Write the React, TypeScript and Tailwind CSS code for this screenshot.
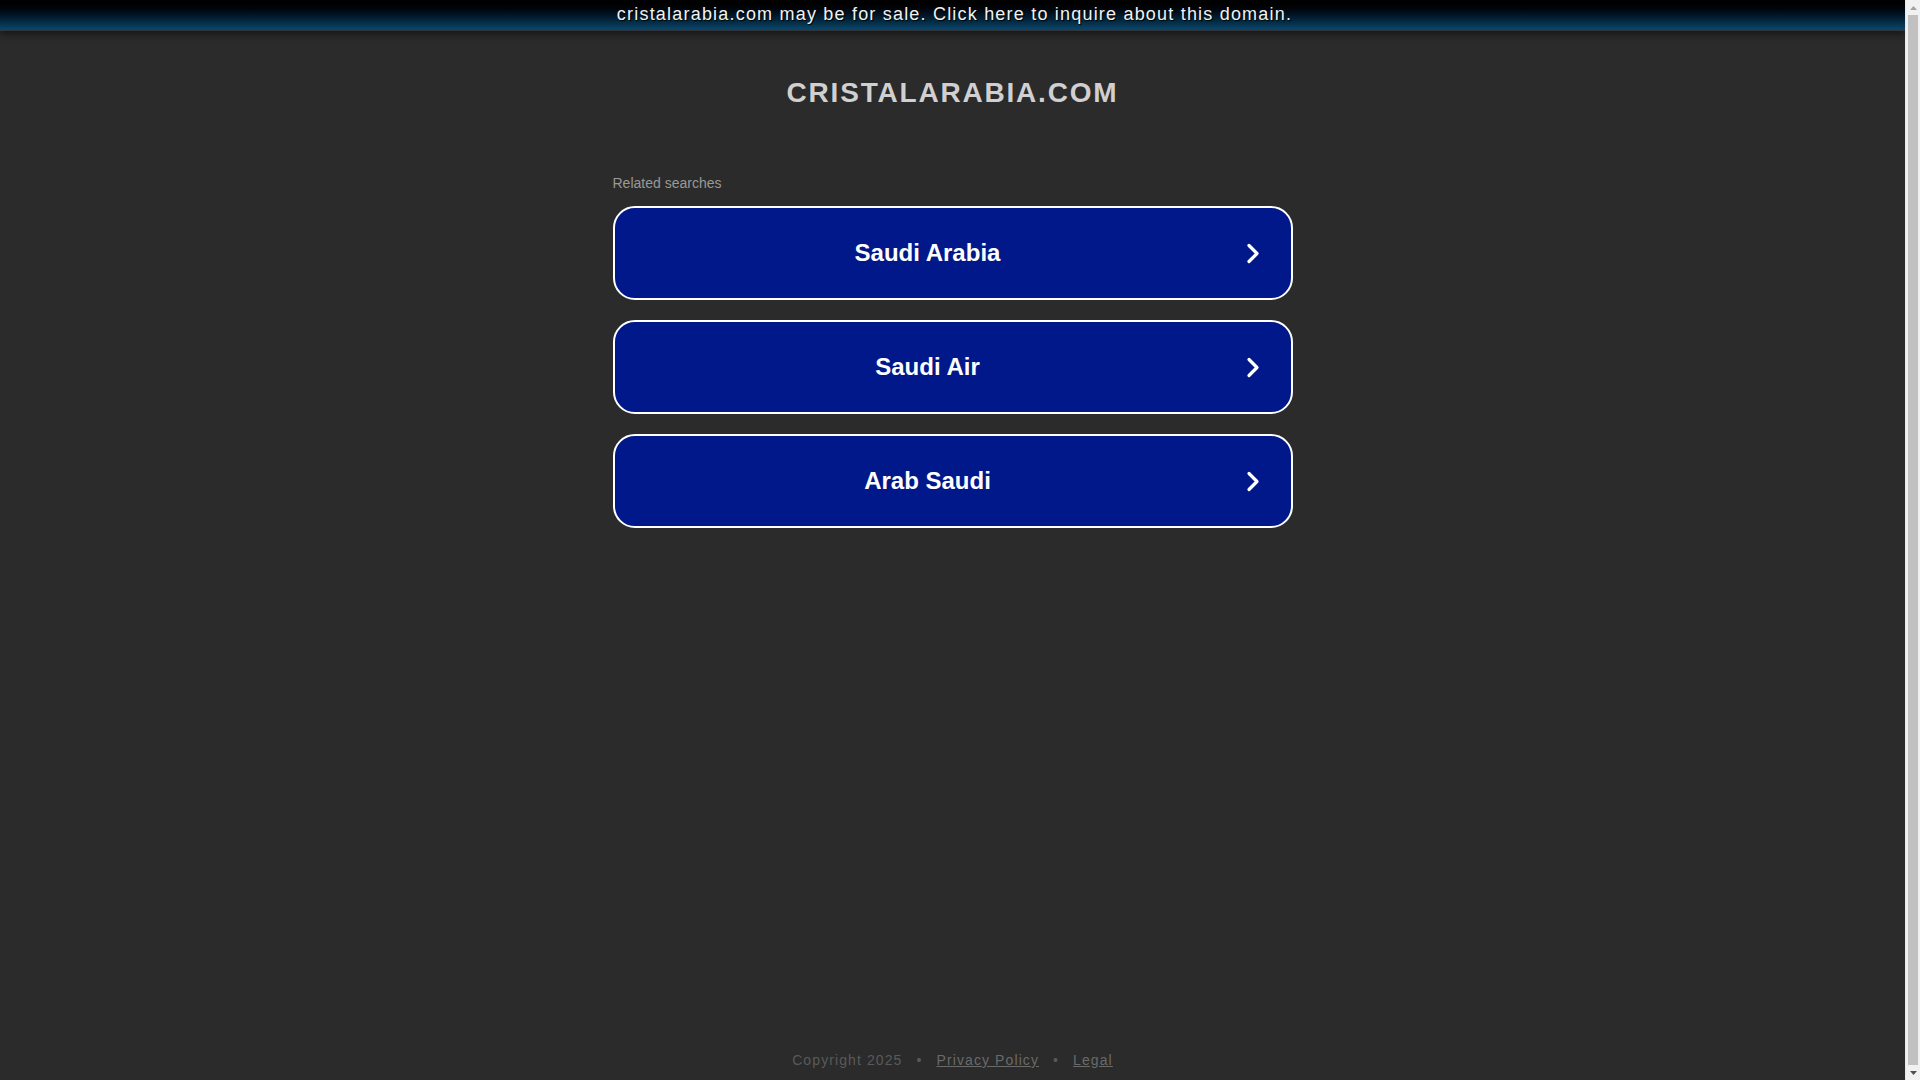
const searches = ["Saudi Arabia", "Saudi Air", "Arab Saudi"];

function Chevron() {
  return (
    <svg width="14" height="21" viewBox="0 0 14 21" fill="none" className="ml-[5px] mr-[31px] shrink-0">
      <polyline points="3,2.5 11,10.5 3,18.5" stroke="#ffffff" strokeWidth="3.2" strokeLinecap="round" strokeLinejoin="round" />
    </svg>
  );
}

function Scrollbar() {
  return (
    <div className="w-[15px] h-[1080px] shrink-0 flex flex-col bg-[#f1f1f1] border-l border-[#e8e8e8]">
      <div className="h-[15px] flex items-center justify-center">
        <svg width="7" height="4" viewBox="0 0 7 4">
          <polygon points="0,4 3.5,0 7,4" fill="#a3a3a3" />
        </svg>
      </div>
      <div className="flex-1 mx-[2px] bg-[#c1c1c1]" />
      <div className="h-[15px] flex items-center justify-center">
        <svg width="7" height="4" viewBox="0 0 7 4">
          <polygon points="0,0 3.5,4 7,0" fill="#505050" />
        </svg>
      </div>
    </div>
  );
}

export default function App() {
  return (
    <div className="h-screen overflow-hidden flex" style={{ fontFamily: '"Liberation Sans", Arial, sans-serif' }}>
      <div className="flex-1 min-h-[1100px] flex flex-col bg-[#2b2b2b]">
        <div className="h-[31px] bg-gradient-to-b from-[#000000] to-[#0a4468] border-b-2 border-[#30363b] shadow-[0_3px_8px_rgba(0,0,0,0.55)] flex items-center justify-center">
          <a className="ml-[4px] text-[18px] leading-[22px] tracking-[1.2px] text-[#f2f2f2] [text-shadow:1px_1px_1px_#000] cursor-pointer mt-[-2px]">
            cristalarabia.com may be for sale. Click here to inquire about this domain.
          </a>
        </div>

        <div className="flex flex-col items-center">
          <h1 className="mt-[46px] text-[28px] leading-[32px] font-bold tracking-[1.8px] text-[#d0d0d0]">
            CRISTALARABIA.COM
          </h1>

          <div className="w-[680px] mt-[66px]">
            <p className="text-[14px] leading-[16px] text-[#999999]">Related searches</p>
            <div className="mt-[15px] flex flex-col gap-[20px]">
              {searches.map((s) => (
                <a
                  key={s}
                  className="h-[94px] flex items-center rounded-[22px] border-2 border-white bg-[#01188a] cursor-pointer"
                >
                  <span className="flex-1 text-center text-[24px] font-bold text-white">{s}</span>
                  <Chevron />
                </a>
              ))}
            </div>
          </div>
        </div>

        <footer className="mt-auto pb-[30px] flex items-center justify-center text-[14px] leading-[20px] tracking-[1.1px] text-[#5a5a5a]">
          <span>Copyright 2025</span>
          <span className="mx-[14px]">•</span>
          <a className="underline text-[#6a6a6a] cursor-pointer">Privacy Policy</a>
          <span className="mx-[14px]">•</span>
          <a className="underline text-[#6a6a6a] cursor-pointer">Legal</a>
        </footer>
      </div>
      <Scrollbar />
    </div>
  );
}
